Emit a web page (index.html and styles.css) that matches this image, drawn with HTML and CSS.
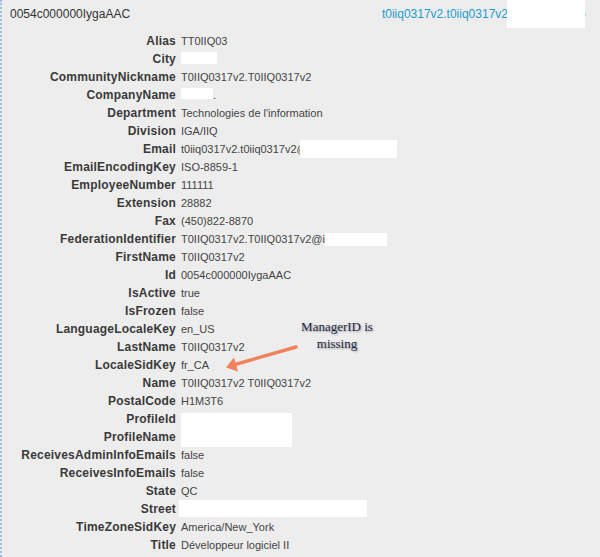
FILE: index.html
```html
<!DOCTYPE html>
<html>
<head>
<meta charset="utf-8">
<link rel="stylesheet" href="styles.css">
</head>
<body>
<div class="page">
  <div class="header">
    <span class="record-id">0054c000000IygaAAC</span>
    <span class="user-link">t0iiq0317v2.t0iiq0317v2<span class="caret"></span></span>
  </div>
  <div class="redact redact-head"></div>
  <dl class="fields">
    <dt>Alias</dt><dd>TT0IIQ03</dd>
    <dt>City</dt><dd><span class="box box-city"></span></dd>
    <dt>CommunityNickname</dt><dd>T0IIQ0317v2.T0IIQ0317v2</dd>
    <dt>CompanyName</dt><dd><span class="box box-company"></span><span class="dot">.</span></dd>
    <dt>Department</dt><dd>Technologies de l'information</dd>
    <dt>Division</dt><dd>IGA/IIQ</dd>
    <dt>Email</dt><dd>t0iiq0317v2.t0iiq0317v2@<span class="box box-email"></span></dd>
    <dt>EmailEncodingKey</dt><dd>ISO-8859-1</dd>
    <dt>EmployeeNumber</dt><dd>111111</dd>
    <dt>Extension</dt><dd>28882</dd>
    <dt>Fax</dt><dd>(450)822-8870</dd>
    <dt>FederationIdentifier</dt><dd>T0IIQ0317v2.T0IIQ0317v2@i<span class="box box-fed"></span></dd>
    <dt>FirstName</dt><dd>T0IIQ0317v2</dd>
    <dt>Id</dt><dd>0054c000000IygaAAC</dd>
    <dt>IsActive</dt><dd>true</dd>
    <dt>IsFrozen</dt><dd>false</dd>
    <dt>LanguageLocaleKey</dt><dd>en_US</dd>
    <dt>LastName</dt><dd>T0IIQ0317v2</dd>
    <dt>LocaleSidKey</dt><dd>fr_CA</dd>
    <dt>Name</dt><dd>T0IIQ0317v2 T0IIQ0317v2</dd>
    <dt>PostalCode</dt><dd>H1M3T6</dd>
    <dt>ProfileId</dt><dd></dd>
    <dt>ProfileName</dt><dd></dd>
    <dt>ReceivesAdminInfoEmails</dt><dd>false</dd>
    <dt>ReceivesInfoEmails</dt><dd>false</dd>
    <dt>State</dt><dd>QC</dd>
    <dt>Street</dt><dd><span class="box box-street"></span></dd>
    <dt>TimeZoneSidKey</dt><dd>America/New_York</dd>
    <dt>Title</dt><dd>Développeur logiciel II</dd>
  </dl>
  <div class="redact redact-profile"></div>
  <div class="note">ManagerID is<br>missing</div>
  <svg class="arrow" width="600" height="557" viewBox="0 0 600 557">
    <line x1="296" y1="347" x2="235" y2="364.5" stroke="#f0825e" stroke-width="3.4" stroke-linecap="round"/>
    <polygon points="226,367.5 238,371.5 234,357.5" fill="#f0825e"/>
  </svg>
</div>
</body>
</html>
```
FILE: styles.css
```css
html, body {
  margin: 0;
  padding: 0;
  background: #ededed;
}
.page {
  position: relative;
  width: 598px;
  height: 557px;
  border-left: 2px dotted #9dbde3;
  font-family: "Liberation Sans", Arial, sans-serif;
  font-size: 12px;
  color: #333;
  box-sizing: border-box;
  overflow: hidden;
}
.header {
  display: flex;
  justify-content: space-between;
  align-items: center;
  height: 28px;
  padding: 0 12px 0 8px;
}
.record-id {
  color: #333;
}
.user-link {
  color: #1d9bcd;
  position: relative;
  padding-right: 78px;
}
.caret {
  position: absolute;
  right: 0;
  top: 5px;
  width: 0;
  height: 0;
  border-left: 4px solid #1d9bcd;
  border-top: 3px solid transparent;
  border-bottom: 3px solid transparent;
}
.fields {
  display: grid;
  grid-template-columns: 174px 1fr;
  column-gap: 5px;
  margin: 4px 0 0 0;
}
.fields dt {
  font-weight: bold;
  text-align: right;
  line-height: 18px;
  height: 18px;
  color: #3a3a3a;
  letter-spacing: 0.2px;
  white-space: nowrap;
}
.fields dd {
  margin: 0;
  line-height: 18px;
  height: 18px;
  font-size: 11px;
  color: #444;
  white-space: nowrap;
}
.box {
  display: inline-block;
  background: #fff;
  vertical-align: top;
}
.box-city {
  width: 36px;
  height: 12px;
  margin-top: 2px;
}
.box-company {
  width: 32px;
  height: 11px;
  margin-top: 2px;
}
.dot {
  color: #444;
}
.box-email {
  width: 97px;
  height: 18px;
  margin-left: -8px;
}
.box-fed {
  width: 62px;
  height: 13px;
  margin-top: 3px;
  margin-left: 0;
}
.box-street {
  width: 188px;
  height: 17px;
  margin-left: -2px;
}
.redact {
  position: absolute;
  background: #fff;
}
.redact-head {
  left: 505px;
  top: 0;
  width: 78px;
  height: 28px;
}
.redact-profile {
  left: 179px;
  top: 413px;
  width: 111px;
  height: 34px;
}
.note {
  position: absolute;
  left: 287px;
  top: 318px;
  width: 96px;
  text-align: center;
  font-family: "Liberation Serif", "Times New Roman", serif;
  font-size: 13px;
  line-height: 17px;
  color: #1f2a48;
  text-shadow: 1px 1px 2px rgba(0, 0, 0, 0.35);
}
.arrow {
  position: absolute;
  left: -2px;
  top: 0;
  pointer-events: none;
}
```
